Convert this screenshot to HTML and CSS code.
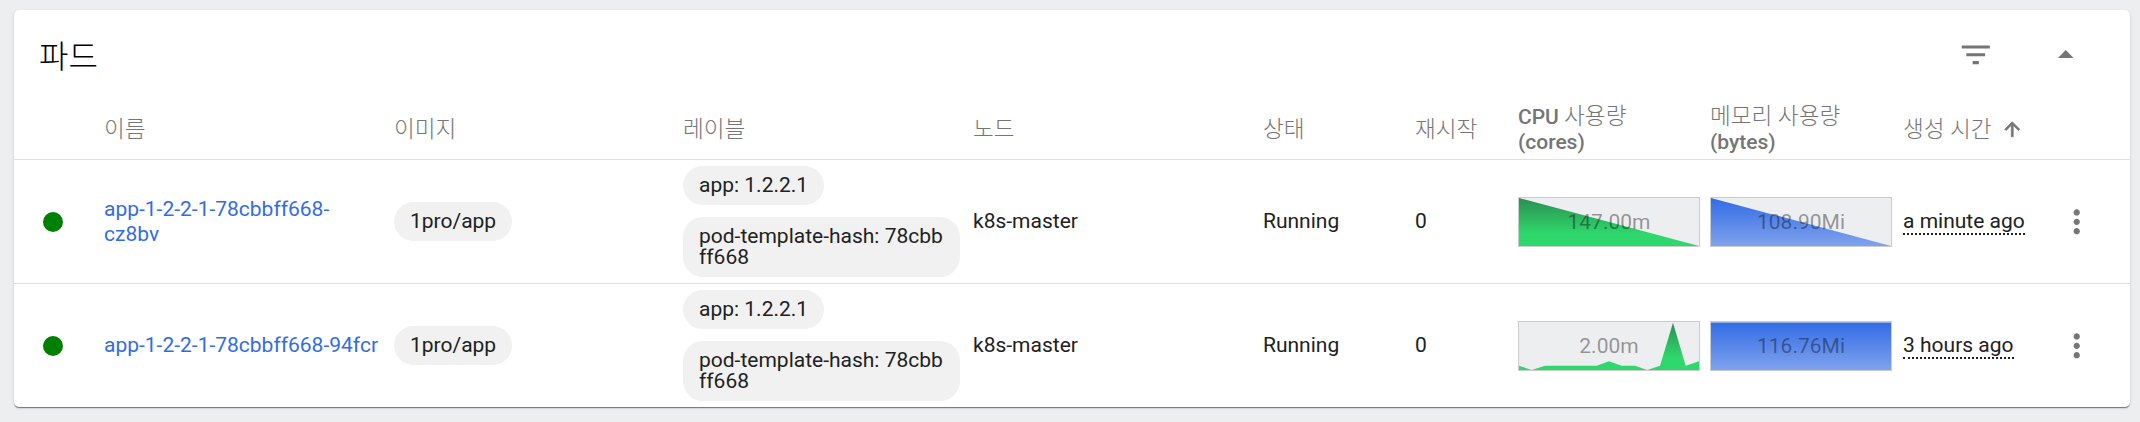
FILE: index.html
```html
<!DOCTYPE html>
<html>
<head>
  <title>파드</title>
  <link rel="stylesheet" href="styles.css">
</head>
<body>
  <div class="card">
    <div class="toolbar">
      <h1 class="title">파드</h1>
      <div class="tools">
        <svg class="icon" viewBox="0 0 24 24"><path d="M10 18h4v-2h-4v2zM3 6v2h18V6H3zm3 7h12v-2H6v2z"/></svg>
        <svg class="icon" viewBox="0 0 24 24"><path d="M7 14l5-5 5 5z"/></svg>
      </div>
    </div>

    <table class="pods">
      <tr>
        <th class="col-dot"></th>
        <th class="col-name"><span class="ko">이름</span></th>
        <th class="col-image"><span class="ko">이미지</span></th>
        <th class="col-labels"><span class="ko">레이블</span></th>
        <th class="col-node"><span class="ko">노드</span></th>
        <th class="col-status"><span class="ko">상태</span></th>
        <th class="col-restarts"><span class="ko">재시작</span></th>
        <th class="col-cpu">CPU <span class="ko">사용량</span><br>(cores)</th>
        <th class="col-mem"><span class="ko">메모리 사용량</span><br>(bytes)</th>
        <th class="col-created"><span class="sort"><span class="ko">생성 시간</span><svg class="sort-icon" viewBox="0 0 24 24"><path d="M4 12l1.41 1.41L11 7.83V20h2V7.83l5.58 5.59L20 12l-8-8-8 8z"/></svg></span></th>
        <th class="col-menu"></th>
      </tr>
      <tr>
        <td><span class="dot"></span></td>
        <td class="name-cell"><a class="pod-link" href="#">app-1-2-2-1-78cbbff668-cz8bv</a></td>
        <td><span class="chip">1pro/app</span></td>
        <td>
          <div class="chips">
            <span class="chip">app: 1.2.2.1</span>
            <span class="chip">pod-template-hash: 78cbbff668</span>
          </div>
        </td>
        <td>k8s-master</td>
        <td>Running</td>
        <td>0</td>
        <td>
          <div class="chart">
            <svg class="chart-svg" viewBox="0 0 180 48" preserveAspectRatio="none">
              <defs>
                <linearGradient id="green" gradientUnits="userSpaceOnUse" x1="0" y1="0" x2="0" y2="48"><stop offset="0" stop-color="#2a8f52"/><stop offset="0.75" stop-color="#2fd86c"/></linearGradient>
                <linearGradient id="blue" gradientUnits="userSpaceOnUse" x1="0" y1="0" x2="0" y2="48"><stop offset="0" stop-color="#326ce5"/><stop offset="1" stop-color="#7fa2ed"/></linearGradient>
              </defs>
              <polygon fill="url(#green)" points="0,0 180,48 0,48"/>
            </svg>
            <span class="chart-value">147.00m</span>
          </div>
        </td>
        <td>
          <div class="chart">
            <svg class="chart-svg" viewBox="0 0 180 48" preserveAspectRatio="none">
              <polygon fill="url(#blue)" points="0,0 180,48 0,48"/>
            </svg>
            <span class="chart-value">108.90Mi</span>
          </div>
        </td>
        <td><span class="age">a minute ago</span></td>
        <td><svg class="icon menu" viewBox="0 0 24 24"><path d="M12 8c1.1 0 2-.9 2-2s-.9-2-2-2-2 .9-2 2 .9 2 2 2zm0 2c-1.1 0-2 .9-2 2s.9 2 2 2 2-.9 2-2-.9-2-2-2zm0 6c-1.1 0-2 .9-2 2s.9 2 2 2 2-.9 2-2-.9-2-2-2z"/></svg></td>
      </tr>
      <tr>
        <td><span class="dot"></span></td>
        <td class="name-cell"><a class="pod-link" href="#">app-1-2-2-1-78cbbff668-94fcr</a></td>
        <td><span class="chip">1pro/app</span></td>
        <td>
          <div class="chips">
            <span class="chip">app: 1.2.2.1</span>
            <span class="chip">pod-template-hash: 78cbbff668</span>
          </div>
        </td>
        <td>k8s-master</td>
        <td>Running</td>
        <td>0</td>
        <td>
          <div class="chart">
            <svg class="chart-svg" viewBox="0 0 180 48" preserveAspectRatio="none">
              <polygon fill="url(#green)" points="0,43.7 12.7,48 26,43.7 77.7,43.7 90,39.3 102.7,43.7 116,43.7 128.3,48 141,43.7 154,0.7 166.7,43.7 180,39.3 180,48 0,48"/>
            </svg>
            <span class="chart-value">2.00m</span>
          </div>
        </td>
        <td>
          <div class="chart">
            <svg class="chart-svg" viewBox="0 0 180 48" preserveAspectRatio="none">
              <polygon fill="url(#blue)" points="0,0.6 180,0.6 180,48 0,48"/>
            </svg>
            <span class="chart-value">116.76Mi</span>
          </div>
        </td>
        <td><span class="age">3 hours ago</span></td>
        <td><svg class="icon menu" viewBox="0 0 24 24"><path d="M12 8c1.1 0 2-.9 2-2s-.9-2-2-2-2 .9-2 2 .9 2 2 2zm0 2c-1.1 0-2 .9-2 2s.9 2 2 2 2-.9 2-2-.9-2-2-2zm0 6c-1.1 0-2 .9-2 2s.9 2 2 2 2-.9 2-2-.9-2-2-2z"/></svg></td>
      </tr>
    </table>
  </div>
</body>
</html>
```

FILE: styles.css
```css
body {
  font-family: Roboto, "Noto Sans CJK KR", sans-serif;
  font-size: 21px;
  color: #212121;
  background-color: #edeef0;
  margin: 0;
  padding: 10px 10px 15px 14px;
}

.card {
  background-color: #fff;
  border-radius: 5px;
  box-shadow: 0 2px 1px -1px rgba(0, 0, 0, .3), 0 1px 1px 0 rgba(0, 0, 0, .25), 0 1px 3px 0 rgba(0, 0, 0, .12);
}

.toolbar {
  display: flex;
  align-items: center;
  justify-content: space-between;
  height: 90px;
  padding: 0 46px 0 25px;
}

.title {
  font-size: 32px;
  font-weight: 300;
  line-height: 40px;
  color: #000;
  margin: 4px 0 0;
}

.tools {
  display: flex;
  gap: 52px;
}

.icon {
  display: block;
  width: 37.5px;
  height: 37.5px;
  fill: #757575;
}

.pods {
  width: 100%;
  table-layout: fixed;
  border-collapse: collapse;
}

.pods th {
  height: 59px;
  padding: 0;
  font-weight: 500;
  line-height: 25px;
  text-align: left;
  color: #757575;
}

.pods td {
  height: 123px;
  padding: 0;
  border-top: 1px solid #e0e0e0;
  line-height: 21px;
}

.pods .name-cell {
  padding-right: 13px;
  line-height: 25px;
}

.ko {
  font-size: 22.6px;
  font-weight: 300;
}

.col-dot { width: 90px; }
.col-name { width: 290px; }
.col-image { width: 289px; }
.col-labels { width: 290px; }
.col-node { width: 290px; }
.col-status { width: 152px; }
.col-restarts { width: 103px; }
.col-cpu { width: 192px; }
.col-mem { width: 193px; }
.col-created { width: 147px; }

.sort {
  display: flex;
  align-items: center;
  gap: 9px;
}

.sort-icon {
  flex: none;
  width: 22.5px;
  height: 22.5px;
  fill: #757575;
  stroke: #757575;
  stroke-width: .8;
}

.dot {
  display: block;
  width: 20px;
  height: 20px;
  margin-left: 29px;
  border-radius: 50%;
  background-color: #008000;
}

.pod-link {
  color: #326ce5;
  text-decoration: none;
}

.chips {
  display: flex;
  flex-direction: column;
  align-items: flex-start;
  gap: 12px;
  width: 277px;
}

.chip {
  display: inline-block;
  padding: 9px 16px;
  border-radius: 20px;
  background-color: #f1f1f1;
  word-break: break-all;
}

.chart {
  position: relative;
  box-sizing: border-box;
  width: 182px;
  height: 50px;
  border: 1px solid #ccc;
  background-color: #edeef0;
}

.chart-svg {
  display: block;
  width: 100%;
  height: 100%;
}

.chart-value {
  position: absolute;
  top: 0;
  left: 0;
  right: 0;
  line-height: 48px;
  text-align: center;
  color: rgba(0, 0, 0, .4);
}

.age {
  border-bottom: 2px dotted #212121;
}

.menu {
  margin-left: 8px;
}
```
